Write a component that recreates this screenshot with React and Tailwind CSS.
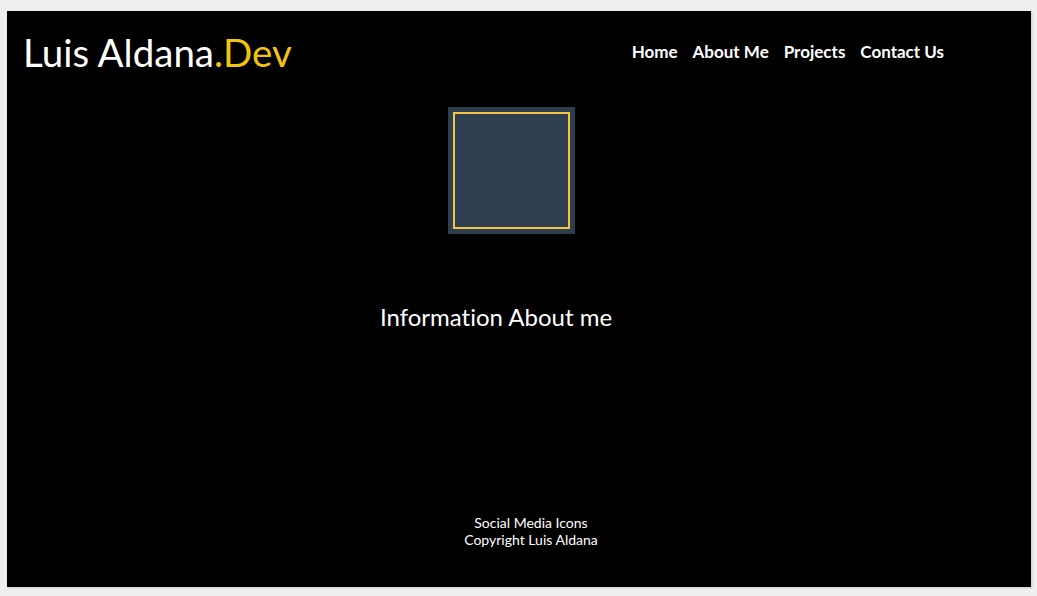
const NAV = ["Home", "About Me", "Projects", "Contact Us"];

export default function App() {
  return (
    <div className="min-h-screen bg-[#efefef] pt-[11px] pl-[7px] font-['Lato',_sans-serif] [font-variant-ligatures:none]">
      <div className="w-[1024px] h-[576px] bg-black text-white flex flex-col shadow-[1px_1px_2px_rgba(0,0,0,0.15)]">
        {/* Header */}
        <header className="flex items-center justify-between pl-[16px] pr-[87px] pt-[19px]">
          <h1 className="text-[38.5px] leading-[44px]">
            Luis Aldana<span className="text-[#f1c40f]">.Dev</span>
          </h1>
          <nav className="flex items-center gap-[15px] text-[17px] font-bold -mt-[1px]">
            {NAV.map((item) => (
              <a key={item} href="#">
                {item}
              </a>
            ))}
          </nav>
        </header>

        {/* Profile picture */}
        <div className="ml-[441px] mt-[33px] w-[127px] h-[127px] bg-[#2c3e50] p-[5px]">
          <div className="w-full h-full border-2 border-[#f3c443]" />
        </div>

        {/* About */}
        <h2 className="ml-[373px] mt-[65px] text-[24px]">Information About me</h2>

        {/* Footer */}
        <footer className="mt-auto mb-[39px] ml-[24px] text-center text-[14px] leading-[17px]">
          <p>Social Media Icons</p>
          <p>Copyright Luis Aldana</p>
        </footer>
      </div>
    </div>
  );
}
